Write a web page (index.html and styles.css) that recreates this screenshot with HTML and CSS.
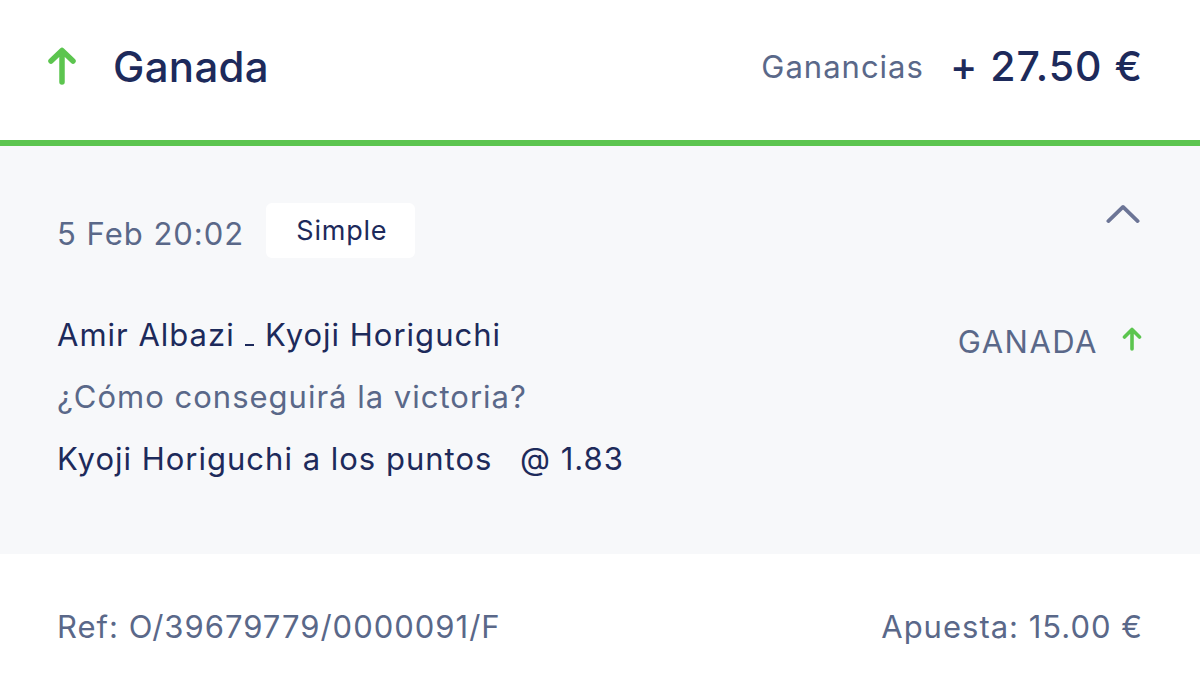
FILE: index.html
```html
<!DOCTYPE html>
<html lang="es">
<head>
    <meta charset="UTF-8">
    <meta name="viewport" content="width=device-width, initial-scale=1.0">
    <title>Apuesta ganada</title>
    <link rel="stylesheet" href="styles.css">
</head>
<body>
    <div class="bet">
        <div class="bet-header">
            <div class="status">
                <svg class="arrow-big" width="30" height="38" viewBox="0 0 30 38">
                    <path d="M15 35 V4 M4 14 L15 3.5 L26 14" fill="none" stroke="#5cc54f" stroke-width="5.5" stroke-linecap="round" stroke-linejoin="round"/>
                </svg>
                <span class="status-text">Ganada</span>
            </div>
            <div class="winnings">
                <span class="winnings-label">Ganancias</span>
                <span class="winnings-amount">+ 27.50 €</span>
            </div>
        </div>

        <div class="bet-body">
            <div class="meta-row">
                <div class="meta">
                    <span class="date">5 Feb 20:02</span>
                    <span class="chip">Simple</span>
                </div>
                <svg class="chevron" width="36" height="22" viewBox="0 0 36 22">
                    <path d="M2.5 19 L18 4 L33.5 19" fill="none" stroke="#6c7596" stroke-width="4" stroke-linecap="round" stroke-linejoin="round"/>
                </svg>
            </div>

            <div class="selection">
                <div class="selection-info">
                    <div class="line event">Amir Albazi <span class="sep"></span> Kyoji Horiguchi</div>
                    <div class="line market">¿Cómo conseguirá la victoria?</div>
                    <div class="line pick">Kyoji Horiguchi a los puntos <span class="odds">@ 1.83</span></div>
                </div>
                <div class="result">
                    <span>GANADA</span>
                    <svg width="22" height="24" viewBox="0 0 22 24">
                        <path d="M11 22 V3 M3.5 10 L11 2.5 L18.5 10" fill="none" stroke="#5cc54f" stroke-width="3.6" stroke-linecap="round" stroke-linejoin="round"/>
                    </svg>
                </div>
            </div>
        </div>

        <div class="bet-footer">
            <span>Ref: O/39679779/0000091/F</span>
            <span>Apuesta: 15.00 €</span>
        </div>
    </div>
</body>
</html>
```

FILE: styles.css
```css
body {
    margin: 0;
    padding: 0;
    background-color: #fff;
    font-family: Inter, "Noto Sans", sans-serif;
    color: #1d2a5b;
}
.bet {
    width: 1200px;
    height: 686px;
    overflow: hidden;
}
.bet-header {
    height: 146px;
    box-sizing: border-box;
    padding: 0 57px 8px 47px;
    display: flex;
    align-items: center;
    justify-content: space-between;
    border-bottom: 6px solid #5cc54f;
}
.status {
    display: flex;
    align-items: center;
}
.arrow-big {
    display: block;
}
.status-text {
    margin-left: 36px;
    font-size: 42px;
    font-weight: 500;
    letter-spacing: 0.3px;
}
.winnings {
    display: flex;
    align-items: center;
}
.winnings-label {
    font-size: 31px;
    letter-spacing: 1px;
    color: #5a6889;
    margin-right: 26px;
}
.winnings-amount {
    font-size: 41px;
    font-weight: 500;
    letter-spacing: 1px;
}
.bet-body {
    background-color: #f7f8fa;
    padding: 57px 57px 64px;
    height: 287px;
    font-size: 31px;
    letter-spacing: 1px;
}
.meta-row {
    display: flex;
    justify-content: space-between;
    align-items: flex-start;
}
.meta {
    display: flex;
    align-items: center;
}
.date {
    color: #5a6889;
    margin-top: 6px;
}
.chip {
    margin-left: 22px;
    background-color: #fff;
    border-radius: 6px;
    height: 55px;
    padding: 0 28px 0 30px;
    display: flex;
    align-items: center;
    font-size: 27px;
    letter-spacing: 0.8px;
}
.chevron {
    display: block;
    margin-right: 3px;
    width: 34px;
    height: 21px;
}
.selection {
    margin-top: 46px;
    display: flex;
    justify-content: space-between;
    align-items: flex-start;
}
.line {
    line-height: 62px;
}
.market {
    color: #5a6889;
}
.sep {
    display: inline-block;
    width: 9px;
    height: 2px;
    background-color: #1d2a5b;
    vertical-align: baseline;
    margin: 0 1px;
}
.odds {
    margin-left: 18px;
}
.result {
    display: flex;
    align-items: center;
    margin-top: 6px;
    height: 62px;
    letter-spacing: 1.5px;
    color: #5a6889;
}
.result svg {
    display: block;
    margin-left: 23px;
    margin-top: -4px;
}
.bet-footer {
    height: 132px;
    box-sizing: border-box;
    padding: 12px 57px 0;
    display: flex;
    align-items: center;
    justify-content: space-between;
    font-size: 31px;
    letter-spacing: 1px;
    color: #5a6889;
}
```
